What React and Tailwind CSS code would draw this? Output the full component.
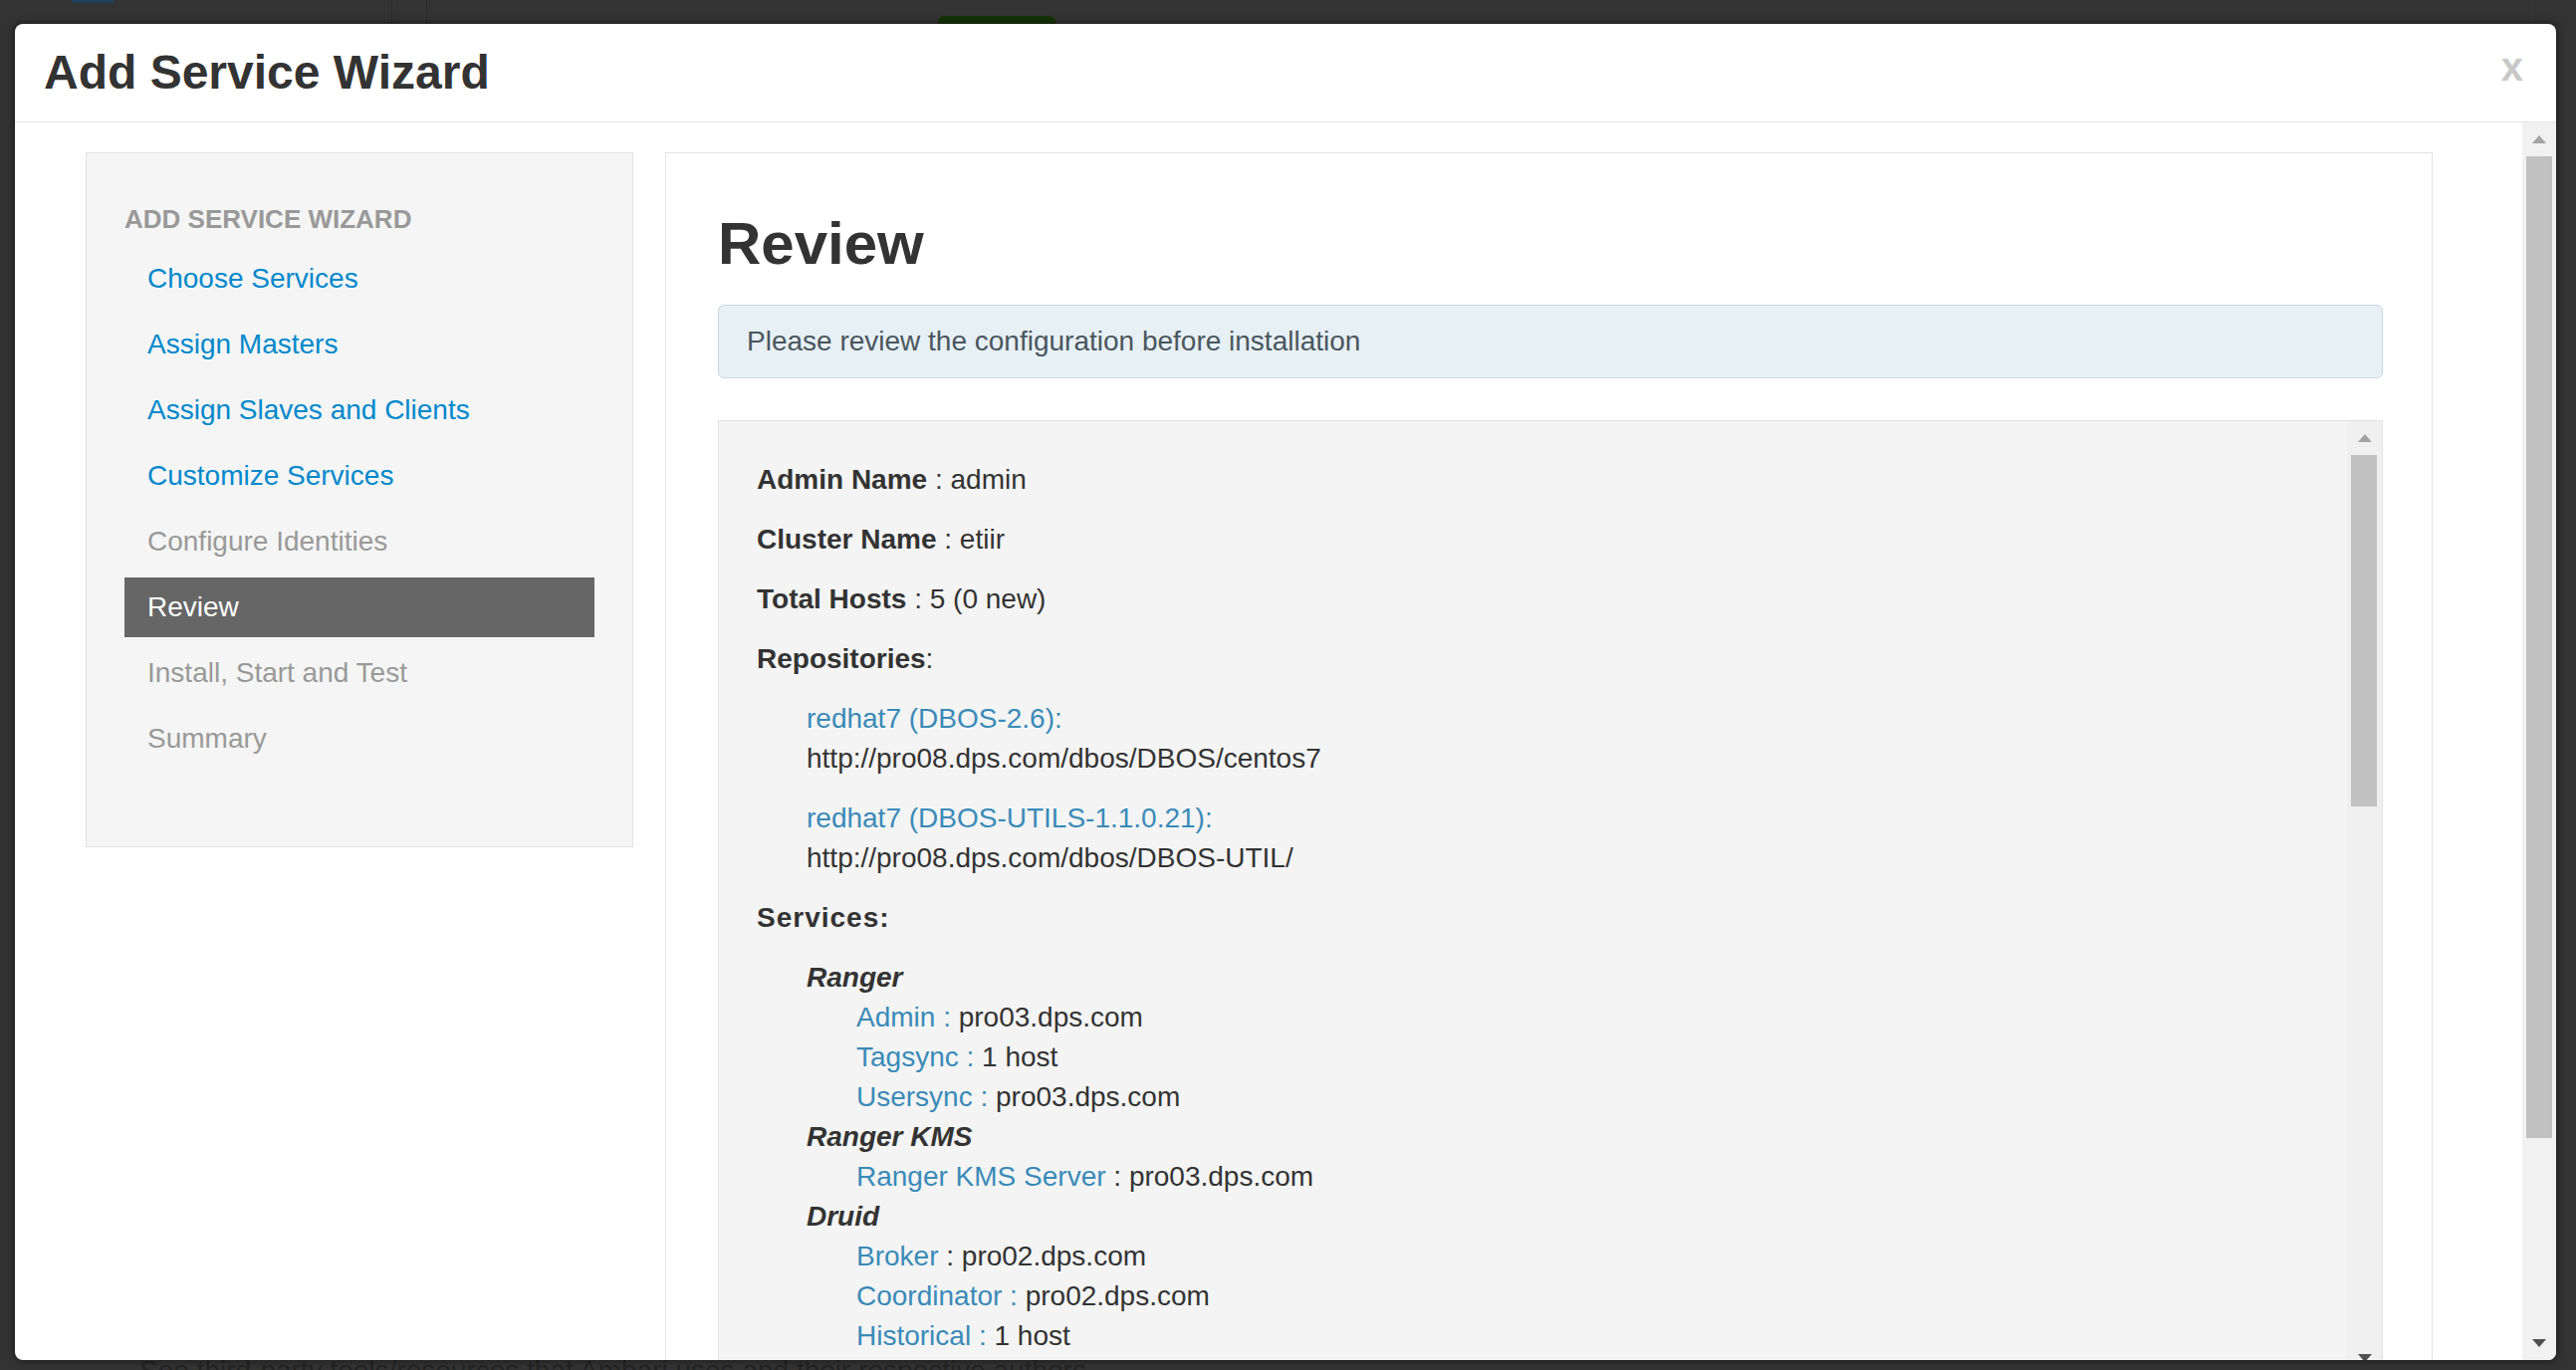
import React from "react";

function Tri({ up = true, color }) {
  return (
    <svg width="14" height="8" viewBox="0 0 14 8">
      <path d={up ? "M7 0L14 8H0Z" : "M0 0H14L7 8Z"} fill={color} />
    </svg>
  );
}

const navItems = [
  { label: "Choose Services", state: "link" },
  { label: "Assign Masters", state: "link" },
  { label: "Assign Slaves and Clients", state: "link" },
  { label: "Customize Services", state: "link" },
  { label: "Configure Identities", state: "off" },
  { label: "Review", state: "active" },
  { label: "Install, Start and Test", state: "off" },
  { label: "Summary", state: "off" },
];

const services = [
  {
    name: "Ranger",
    items: [
      { k: "Admin :", v: "pro03.dps.com", blueColon: true },
      { k: "Tagsync :", v: "1 host", blueColon: true },
      { k: "Usersync :", v: "pro03.dps.com", blueColon: true },
    ],
  },
  {
    name: "Ranger KMS",
    items: [{ k: "Ranger KMS Server", v: "pro03.dps.com", blueColon: false }],
  },
  {
    name: "Druid",
    items: [
      { k: "Broker", v: "pro02.dps.com", blueColon: false },
      { k: "Coordinator :", v: "pro02.dps.com", blueColon: true },
      { k: "Historical :", v: "1 host", blueColon: true },
    ],
  },
];

export default function App() {
  return (
    <div className="relative w-[2587px] h-[1376px] overflow-hidden bg-[#333333] font-['Liberation_Sans',Arial,Helvetica,sans-serif]">
      {/* background page (dimmed) */}
      <div className="flex flex-col h-full">
        <div className="flex h-[24px]">
          <div className="w-[394px] border-r border-[#2b2b2b]">
            <div className="ml-[72px] w-[42px] h-[3px] bg-[#1f3f5a]" />
          </div>
          <div className="w-[35px] border-r border-[#2a2a2a]" />
          <div className="flex-1 flex items-start pl-[513px] pt-[16px]">
            <div className="w-[118px] h-[12px] rounded-t-[6px] bg-[#17330a]" />
          </div>
          <div className="w-[45px] border-l border-[#3a3a3a]" />
        </div>
        <div className="flex-1" />
        <div className="h-[10px] overflow-hidden pl-[140px] text-[28px] leading-[22px] text-[#242424] whitespace-nowrap">
          See third-party tools/resources that Ambari uses and their respective authors
        </div>
      </div>

      {/* modal */}
      <div className="absolute left-[15px] top-[24px] w-[2552px] h-[1342px] bg-white rounded-[8px] shadow-[0_0_8px_rgba(0,0,0,0.6)] overflow-hidden flex flex-col">
        <div className="h-[99px] shrink-0 border-b border-[#e5e5e5] flex items-start justify-between pl-[29px] pr-[33px]">
          <div className="mt-[25px] text-[48px] leading-[48px] font-bold text-[#333333]">
            Add Service Wizard
          </div>
          <div className="mt-[23px] text-[40px] leading-[40px] font-bold text-[#c8c8c8]">x</div>
        </div>

        <div className="flex-1 flex min-h-0">
          <div className="flex-1 flex items-start gap-[32px] pl-[71px] pt-[30px] overflow-hidden">
            {/* sidebar */}
            <div className="w-[550px] h-[698px] shrink-0 bg-[#f5f5f5] border border-[#e3e3e3] px-[38px] pt-[46px]">
              <div className="h-[40px] leading-[40px] text-[26px] font-bold text-[#999999] uppercase">
                Add Service Wizard
              </div>
              <div className="mt-[10px] flex flex-col gap-[6px]">
                {navItems.map((it) => (
                  <div
                    key={it.label}
                    className={
                      it.state === "active"
                        ? "h-[60px] leading-[60px] pl-[23px] text-[28px] bg-[#666666] text-white"
                        : it.state === "link"
                        ? "h-[60px] leading-[60px] pl-[23px] text-[28px] text-[#0088cc]"
                        : "h-[60px] leading-[60px] pl-[23px] text-[28px] text-[#999999]"
                    }
                  >
                    {it.label}
                  </div>
                ))}
              </div>
            </div>

            {/* main panel */}
            <div className="w-[1775px] h-[1300px] shrink-0 border border-[#e3e3e3] bg-white pt-[58px] pl-[52px] pr-[49px]">
              <div className="text-[60px] leading-[66px] font-bold text-[#333333]">Review</div>
              <div className="mt-[28px] h-[74px] border border-[#c9d8e0] bg-[#e6f0f5] rounded-[6px] pl-[28px] flex items-center text-[28px] text-[#4a565d]">
                Please review the configuration before installation
              </div>

              <div className="mt-[42px] h-[960px] border border-[#e2e2e2] bg-[#f4f4f4] flex">
                <div className="flex-1 pt-[39px] pl-[38px] text-[28px] leading-[40px] text-[#333333] overflow-hidden">
                  <div className="mb-[20px]">
                    <span className="font-bold">Admin Name</span> : admin
                  </div>
                  <div className="mb-[20px]">
                    <span className="font-bold">Cluster Name</span> : etiir
                  </div>
                  <div className="mb-[20px]">
                    <span className="font-bold">Total Hosts</span> : 5 (0 new)
                  </div>
                  <div className="mb-[20px]">
                    <span className="font-bold">Repositories</span>:
                  </div>
                  <div className="pl-[50px]">
                    <div className="mb-[20px]">
                      <div className="text-[#3a8ab8]">redhat7 (DBOS-2.6):</div>
                      <div>http://pro08.dps.com/dbos/DBOS/centos7</div>
                    </div>
                    <div className="mb-[20px]">
                      <div className="text-[#3a8ab8]">redhat7 (DBOS-UTILS-1.1.0.21):</div>
                      <div>http://pro08.dps.com/dbos/DBOS-UTIL/</div>
                    </div>
                  </div>
                  <div className="mb-[20px] font-bold tracking-[1px]">Services:</div>
                  <div className="pl-[50px]">
                    {services.map((s) => (
                      <div key={s.name}>
                        <div className="font-bold italic">{s.name}</div>
                        <div className="pl-[50px]">
                          {s.items.map((i) => (
                            <div key={i.k}>
                              <span className="text-[#3a8ab8]">{i.k}</span>
                              {i.blueColon ? " " : " : "}
                              {i.v}
                            </div>
                          ))}
                        </div>
                      </div>
                    ))}
                  </div>
                </div>
                {/* inner scrollbar */}
                <div className="w-[35px] shrink-0 bg-[#f0f0f0] flex flex-col">
                  <div className="h-[34px] flex items-center justify-center">
                    <Tri up color="#a3a3a3" />
                  </div>
                  <div className="ml-[4px] mr-[5px] h-[353px] bg-[#c1c1c1]" />
                  <div className="flex-1" />
                  <div className="h-[34px] flex items-center justify-center">
                    <Tri up={false} color="#505050" />
                  </div>
                </div>
              </div>
            </div>
          </div>

          {/* modal scrollbar */}
          <div className="w-[34px] shrink-0 bg-[#f1f1f1] flex flex-col">
            <div className="h-[34px] flex items-center justify-center">
              <Tri up color="#a3a3a3" />
            </div>
            <div className="mx-[4px] h-[986px] bg-[#c1c1c1]" />
            <div className="flex-1" />
            <div className="h-[34px] flex items-center justify-center">
              <Tri up={false} color="#505050" />
            </div>
          </div>
        </div>
      </div>
    </div>
  );
}
